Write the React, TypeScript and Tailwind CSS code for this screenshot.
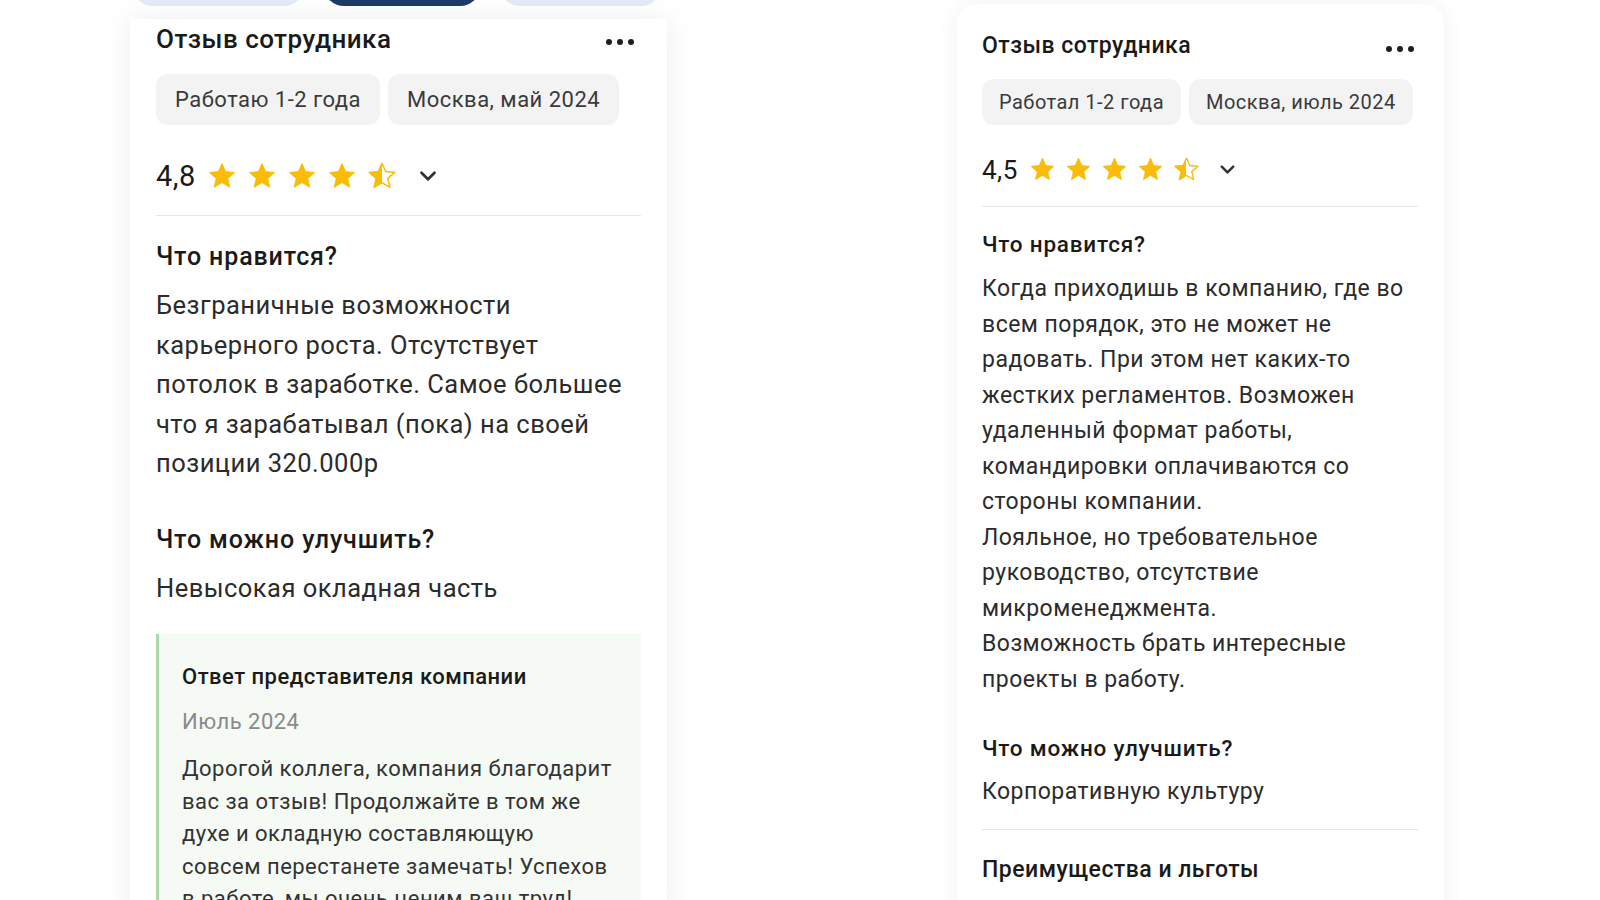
import { useId } from "react";

const STAR = "12,1.8 14.95,8.45 22.2,9.15 16.7,13.95 18.35,21.1 12,17.35 5.65,21.1 7.3,13.95 1.8,9.15 9.05,8.45";

function Star({ half = false, size }: { half?: boolean; size: number }) {
  const id = useId();
  return (
    <svg width={size} height={size} viewBox="0 0 24 24">
      {half && (
        <defs>
          <linearGradient id={id} x1="0" x2="1" y1="0" y2="0">
            <stop offset="50%" stopColor="#fbbc05" />
            <stop offset="50%" stopColor="#ffffff" />
          </linearGradient>
        </defs>
      )}
      <polygon
        points={STAR}
        fill={half ? `url(#${id})` : "#fbbc05"}
        stroke="#fbbc05"
        strokeWidth={half ? 1.2 : 0.6}
        strokeLinejoin="round"
      />
    </svg>
  );
}

function Dots() {
  return (
    <div className="flex items-center gap-[5px] mt-[6px]">
      <span className="w-[6px] h-[6px] rounded-full bg-[#1f1f1f]" />
      <span className="w-[6px] h-[6px] rounded-full bg-[#1f1f1f]" />
      <span className="w-[6px] h-[6px] rounded-full bg-[#1f1f1f]" />
    </div>
  );
}

function Chevron({ size }: { size: number }) {
  return (
    <svg width={size} height={size} viewBox="0 0 24 24" fill="none" stroke="#333" strokeWidth="2.6" strokeLinecap="round" strokeLinejoin="round">
      <path d="M6 9l6 6 6-6" />
    </svg>
  );
}

function Rating({ value, star, gap, chevronGap, textClass }: { value: string; star: number; gap: string; chevronGap: string; textClass: string }) {
  return (
    <div className="flex items-center">
      <span className={textClass}>{value}</span>
      <div className={`flex items-center ${gap}`}>
        <Star size={star} />
        <Star size={star} />
        <Star size={star} />
        <Star size={star} />
        <Star size={star} half />
      </div>
      <div className={chevronGap}>
        <Chevron size={star - 4} />
      </div>
    </div>
  );
}

const rightLiked = [
  "Когда приходишь в компанию, где во",
  "всем порядок, это не может не",
  "радовать. При этом нет каких-то",
  "жестких регламентов. Возможен",
  "удаленный формат работы,",
  "командировки оплачиваются со",
  "стороны компании.",
  "Лояльное, но требовательное",
  "руководство, отсутствие",
  "микроменеджмента.",
  "Возможность брать интересные",
  "проекты в работу.",
];

const leftLiked = [
  "Безграничные возможности",
  "карьерного роста. Отсутствует",
  "потолок в заработке. Самое большее",
  "что я зарабатывал (пока) на своей",
  "позиции 320.000р",
];

const reply = [
  "Дорогой коллега, компания благодарит",
  "вас за отзыв! Продолжайте в том же",
  "духе и окладную составляющую",
  "совсем перестанете замечать! Успехов",
  "в работе, мы очень ценим ваш труд!",
];

function LeftCard() {
  return (
    <div className="flex flex-col w-[537px]">
      <div className="h-[6px] overflow-hidden flex items-end gap-[20px] pl-[3px]">
        <div className="w-[171px] h-[40px] rounded-full bg-[#e3ebf6] shrink-0" />
        <div className="w-[156px] h-[40px] rounded-full bg-[#1e3a66] shrink-0" />
        <div className="w-[161px] h-[40px] rounded-full bg-[#e3ebf6] shrink-0" />
      </div>
      <div className="mt-[13px] h-[900px] bg-white shadow-[0_0_28px_rgba(0,0,0,0.07)] px-[26px] pt-[5px]">
        <div className="flex items-center justify-between h-[30px] pr-[7px]">
          <h2 className="text-[26px] font-medium text-[#1a1a1a] leading-[30px]">Отзыв сотрудника</h2>
          <Dots />
        </div>
        <div className="mt-[20px] flex gap-[8px]">
          <span className="h-[51px] px-[19px] flex items-center rounded-[12px] bg-[#f3f3f3] text-[22px] text-[#3a3a3a]">Работаю 1-2 года</span>
          <span className="h-[51px] px-[19px] flex items-center rounded-[12px] bg-[#f3f3f3] text-[22px] text-[#3a3a3a]">Москва, май 2024</span>
        </div>
        <div className="mt-[33px] h-[36px]">
          <Rating value="4,8" star={30} gap="gap-[10px] ml-[11px]" chevronGap="ml-[18px]" textClass="text-[29px] text-[#1a1a1a] leading-[36px]" />
        </div>
        <div className="mt-[21px] h-px bg-[#e6e6e6]" />
        <h3 className="mt-[26px] text-[25px] font-medium tracking-[0.035em] text-[#1a1a1a] leading-[30px]">Что нравится?</h3>
        <p className="mt-[14px] text-[25.5px] leading-[39.5px] text-[#2b2b2b]">
          {leftLiked.map((l) => (
            <span key={l} className="block whitespace-nowrap">{l}</span>
          ))}
        </p>
        <h3 className="mt-[41px] text-[25px] font-medium tracking-[0.035em] text-[#1a1a1a] leading-[30px]">Что можно улучшить?</h3>
        <p className="mt-[14px] text-[25.5px] leading-[39.5px] text-[#2b2b2b]">Невысокая окладная часть</p>
        <div className="mt-[26px] border-l-[3px] border-[#a9d8ab] bg-[#f5faf5] pl-[23px] pr-[20px] pt-[29px] pb-[20px]">
          <h4 className="text-[22px] font-medium text-[#1a1a1a] leading-[28px]">Ответ представителя компании</h4>
          <div className="mt-[17px] text-[22px] text-[#8a8a8a] leading-[28px]">Июль 2024</div>
          <p className="mt-[17px] text-[22px] leading-[32.5px] text-[#333]">
            {reply.map((l) => (
              <span key={l} className="block whitespace-nowrap">{l}</span>
            ))}
          </p>
        </div>
      </div>
    </div>
  );
}

function RightCard() {
  return (
    <div className="mt-[4px] w-[487px] h-[1000px] bg-white rounded-t-[20px] shadow-[0_0_24px_rgba(0,0,0,0.06)] pl-[25px] pr-[26px] pt-[28px]">
      <div className="flex items-center justify-between h-[28px] pr-[4px]">
        <h2 className="text-[23px] font-medium text-[#1a1a1a] leading-[28px]">Отзыв сотрудника</h2>
        <Dots />
      </div>
      <div className="mt-[18.5px] flex gap-[8px]">
        <span className="h-[46px] px-[17px] flex items-center rounded-[12px] bg-[#f3f3f3] text-[20px] text-[#3a3a3a]">Работал 1-2 года</span>
        <span className="h-[46px] px-[17px] flex items-center rounded-[12px] bg-[#f3f3f3] text-[20px] text-[#3a3a3a]">Москва, июль 2024</span>
      </div>
      <div className="mt-[28px] h-[34px]">
        <Rating value="4,5" star={27} gap="gap-[9px] ml-[11px]" chevronGap="ml-[16px]" textClass="text-[26px] text-[#1a1a1a] leading-[34px]" />
      </div>
      <div className="mt-[19.5px] h-px bg-[#e6e6e6]" />
      <h3 className="mt-[23px] text-[22.5px] font-medium tracking-[0.035em] text-[#1a1a1a] leading-[28px]">Что нравится?</h3>
      <p className="mt-[13px] text-[23px] leading-[35.5px] text-[#2b2b2b]">
        {rightLiked.map((l) => (
          <span key={l} className="block whitespace-nowrap">{l}</span>
        ))}
      </p>
      <h3 className="mt-[37px] text-[22.5px] font-medium tracking-[0.035em] text-[#1a1a1a] leading-[28px]">Что можно улучшить?</h3>
      <p className="mt-[12px] text-[23px] leading-[35.5px] text-[#2b2b2b]">Корпоративную культуру</p>
      <div className="mt-[19px] h-px bg-[#e6e6e6]" />
      <h3 className="mt-[25px] text-[23px] font-medium text-[#1a1a1a] leading-[30px]">Преимущества и льготы</h3>
    </div>
  );
}

export default function App() {
  return (
    <div className="w-[1600px] h-[900px] overflow-hidden bg-white font-['Roboto',sans-serif] tracking-[0.03em]">
      <div className="flex items-start pl-[130px] gap-[290px]">
        <LeftCard />
        <RightCard />
      </div>
    </div>
  );
}
